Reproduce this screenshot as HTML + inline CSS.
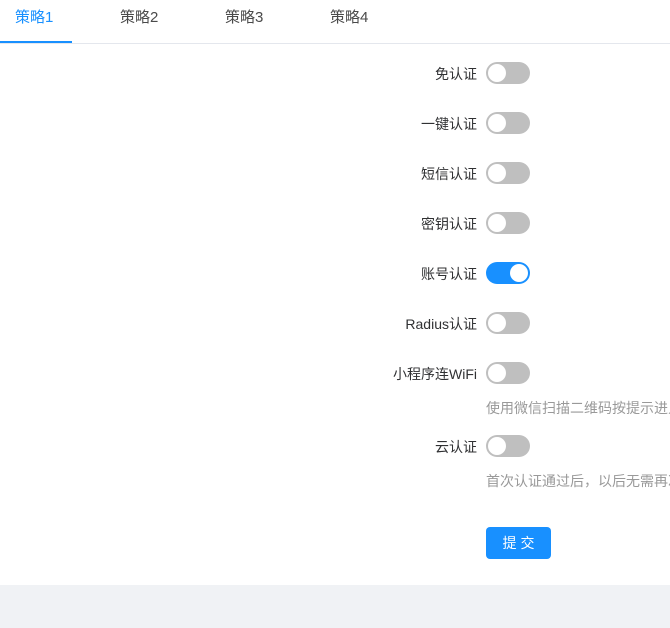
<!DOCTYPE html>
<html><head><meta charset="utf-8"><style>
*{margin:0;padding:0;box-sizing:border-box}
body{width:670px;height:628px;overflow:hidden;background:#fff;font-family:"Liberation Sans","Noto Sans CJK SC",sans-serif;position:relative}
.tabs{position:absolute;left:0;top:0;width:670px;height:44px;border-bottom:1px solid #e4e7ed}
.tab{position:absolute;top:8px;font-size:15px;color:#4a4a4a;line-height:20px}
.tab.a{color:#1890ff}
.bar{position:absolute;left:0;top:41px;width:72px;height:2px;background:#1890ff}
.lbl{position:absolute;right:193px;font-size:14px;color:#303133;line-height:20px;text-align:right}
.sw{position:absolute;left:486px;width:44px;height:22px;border-radius:11px;background:#bfbfbf}
.sw::after{content:"";position:absolute;left:2px;top:2px;width:18px;height:18px;border-radius:50%;background:#fff}
.sw.on{background:#1890ff}
.sw.on::after{left:24px}
.hint{position:absolute;left:486px;width:184px;overflow:hidden;font-size:14px;color:#999;white-space:nowrap;line-height:18px}
.btn{position:absolute;left:486px;top:527px;width:65px;height:32px;border-radius:4px;background:#1890ff;color:#fff;font-size:14px;line-height:32px;text-align:center;letter-spacing:4px;padding-left:4px}
.foot{position:absolute;left:0;top:585px;width:670px;height:43px;background:#f0f2f5}
</style></head><body>
<div class="tabs">
<div class="tab a" style="left:15px">策略1</div>
<div class="tab" style="left:120px">策略2</div>
<div class="tab" style="left:225px">策略3</div>
<div class="tab" style="left:330px">策略4</div>
<div class="bar"></div>
</div>
<div class="lbl" style="top:64px">免认证</div><div class="sw" style="top:62px"></div>
<div class="lbl" style="top:114px">一键认证</div><div class="sw" style="top:112px"></div>
<div class="lbl" style="top:164px">短信认证</div><div class="sw" style="top:162px"></div>
<div class="lbl" style="top:214px">密钥认证</div><div class="sw" style="top:212px"></div>
<div class="lbl" style="top:264px">账号认证</div><div class="sw on" style="top:262px"></div>
<div class="lbl" style="top:314px">Radius认证</div><div class="sw" style="top:312px"></div>
<div class="lbl" style="top:364px">小程序连WiFi</div><div class="sw" style="top:362px"></div>
<div class="hint" style="top:399px">使用微信扫描二维码按提示进入</div>
<div class="lbl" style="top:437px">云认证</div><div class="sw" style="top:435px"></div>
<div class="hint" style="top:472px">首次认证通过后，以后无需再次认证</div>
<div class="btn">提交</div>
<div class="foot"></div>
</body></html>
